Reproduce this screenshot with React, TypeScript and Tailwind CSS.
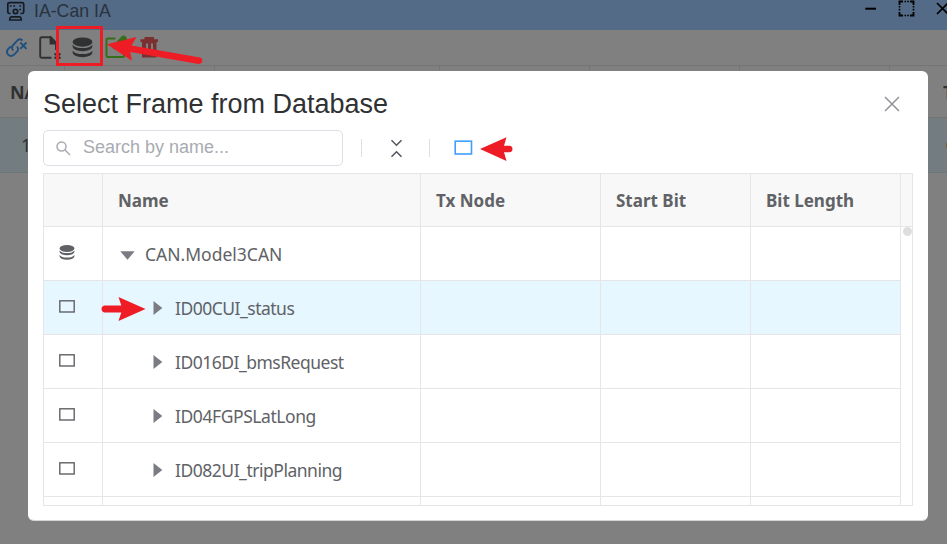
import React from 'react';

const uiFont = 'font-["Noto_Sans","Open_Sans",sans-serif]';
const arial = 'font-["Liberation_Sans",Arial,sans-serif]';

function DatabaseIcon({ className }: { className: string }) {
  return (
    <svg className={className} viewBox="0 0 21 20" fill="currentColor">
      <ellipse cx="10.5" cy="4.6" rx="9.9" ry="4.6" />
      <path d="M.6 7.200Q3 10.600 10.5 10.600T20.400 7.200V9Q20.400 11 17.700 12.300Q14.700 13.700 10.500 13.700T3.300 12.300Q.600 11 .600 9Z" />
      <path d="M.6 13.200Q3 16.600 10.500 16.600T20.400 13.200V15Q20.400 17 17.700 18.300Q14.700 19.700 10.500 19.700T3.300 18.300Q.600 17 .600 15Z" />
    </svg>
  );
}

function FrameIcon() {
  return (
    <svg className="h-[13px] w-4" viewBox="0 0 16 13" fill="none" stroke="#606266" strokeWidth="1.4">
      <rect x=".8" y=".8" width="14.4" height="11.2" />
    </svg>
  );
}

function TitleBar() {
  return (
    <header className="flex h-[30px] items-start bg-[#536b87] text-[#161b22]">
      <svg className="ml-[6px] mt-[1px] h-[21px] w-[20px]" viewBox="6 1 20 21" fill="none" stroke="currentColor" strokeWidth="1.7">
        <path d="M10.500 13.500H9.500Q7.800 13.500 7.800 12V4Q7.800 2.700 9.500 2.700H22Q23.700 2.700 23.700 4V12Q23.700 13.500 22 13.500H20.500" />
        <circle cx="15.500" cy="11.500" r="2.200" />
        <path d="M9.800 20V18.500Q10 16.800 12 16.800H19Q21 16.800 21.200 18.500V20Z" />
        <path d="M9.800 6h1.800M13.300 6h1.800M19.300 6h1.800M19.300 9.500h1.800" />
      </svg>
      <span className={`${arial} ml-[8px] -mt-px text-[17.700px] leading-6 text-[#2a323c]`}>IA-Can IA</span>
      <div className="ml-auto flex text-black">
        <svg className="h-[18px] w-[82px]" viewBox="865 0 82 18" fill="none" stroke="currentColor">
          <path d="M865.3 8.7H876" strokeWidth="2" />
          <path d="M899.5 5V1.5H903M910 1.5H913.5V5M913.5 12V15.5H910M903 15.5H899.5V12" strokeWidth="1.8" />
          <path d="M904.5 1.5H909M904.5 15.5H909M899.5 6V11M913.5 6V11" strokeWidth="1.6" strokeDasharray="1.6 1.2" />
          <path d="M937 3L948 14M937 14L948 3" strokeWidth="1.7" />
        </svg>
      </div>
    </header>
  );
}

function Toolbar() {
  return (
    <div className="flex h-9 items-start border-b border-[#757575] bg-[#808080]">
      <svg className="ml-[5px] mt-[7px] h-[22px] w-[23px]" viewBox="5 37 23 22" fill="none" stroke="#205080" strokeWidth="1.900">
        <path d="M10.800 46.300L8.200 49Q5.700 51.800 8.100 54.600Q11 57.200 13.900 54.800L17.200 51.500Q19 49 17 46.500" />
        <path d="M13.300 50.500Q10.700 47.800 13.200 45L16.500 41.300Q19.500 37.700 22.500 40.500" />
        <path d="M20.300 42.500L26.500 48.800M26.500 42.500L20.300 48.800" />
      </svg>
      <svg className="ml-[10px] mt-[6px] h-6 w-[24px]" viewBox="38 36 24 24" fill="none" stroke="#303133" strokeWidth="1.900">
        <path d="M51.500 57.800H42Q40.200 57.800 40.200 56V39Q40.200 37.300 42 37.300H50.500L56 43V50" />
        <path d="M50.500 37L56.500 43.500H50.500Z" fill="#303133" />
        <path d="M54.500 53.500L60.500 58.500M60.500 53.500L54.500 58.500" />
      </svg>
      <DatabaseIcon className="ml-[10px] mt-[7px] h-[21px] w-[21px] text-[#303133]" />
      <svg className="ml-3 mt-[5px] h-[24px] w-[24px]" viewBox="105 35 24 24" fill="none" stroke="#356f17" strokeWidth="2">
        <path d="M115.500 38.500H107.500Q106.500 38.500 106.500 39.500V55.500Q106.500 57 107.500 57H123Q124 57 124 56V47" />
        <path d="M113 49V45.500L121.500 36.500Q124 34.500 126 37Q128 39 126 41L117 49.500Z" fill="#356f17" stroke="none" />
      </svg>
      <svg className="ml-[11px] mt-[7px] h-[21px] w-[19px]" viewBox="140 37 19 21" fill="#7a3030">
        <path fillRule="evenodd" d="M140.500 39.200H144.500V37H154V39.200H158V42H156.500V57.500H142V42H140.500ZM146 43.500V53.500H148V43.500ZM151 43.500V53.500H153V43.500Z" />
      </svg>
    </div>
  );
}

function Workspace() {
  return (
    <div className={`${uiFont} text-lg text-[#303133]`}>
      <div className="flex h-[52px] border-b border-[#757575]">
        <div className="flex w-[65px] items-center border-r border-[#757575] pl-[10px] font-bold tracking-[-0.500px]">N/</div>
        <div className="w-[150px] border-r border-[#757575]" />
        <div className="w-[225px] border-r border-[#757575]" />
        <div className="w-[150px] border-r border-[#757575]" />
        <div className="w-[150px] border-r border-[#757575]" />
        <div className="w-[150px] border-r border-[#757575]" />
        <div className="flex flex-1 items-center overflow-hidden pl-[53px] font-bold">T</div>
      </div>
      <div className="flex h-[55px] items-center border-b border-[#6c7678] bg-[#737c80]">
        <span className="pl-[21px]">1</span>
        <span className="ml-auto h-[5px] w-[1px] bg-[#8a5c20]" />
      </div>
    </div>
  );
}

type FrameRow = { name: string; kind: 'database' | 'frame'; selected?: boolean; tracking: string };

const rows: FrameRow[] = [
  { name: 'CAN.Model3CAN', kind: 'database', tracking: 'tracking-[0px]' },
  { name: 'ID00CUI_status', kind: 'frame', selected: true, tracking: 'tracking-[-0.5px]' },
  { name: 'ID016DI_bmsRequest', kind: 'frame', tracking: 'tracking-[-0.5px]' },
  { name: 'ID04FGPSLatLong', kind: 'frame', tracking: 'tracking-[-0.43px]' },
  { name: 'ID082UI_tripPlanning', kind: 'frame', tracking: 'tracking-[-0.48px]' },
];

const columns = 'grid shrink-0 grid-cols-[59px_318px_180px_150px_150px]';
const cell = 'border-r border-b border-[#e6e6e6]';
const headCell = 'flex items-center border-r border-[#e6e6e6] pl-[15px] pt-[2px]';

function FrameTable() {
  return (
    <div className={`${uiFont} mt-[7px] flex h-[333px] w-[870px] flex-col overflow-hidden border border-[#e6e6e6] text-[#606266]`}>
      <div className="flex h-[53px] shrink-0 border-b border-[#e6e6e6] bg-[#f8f8f8] text-[17px] font-bold">
        <div className={columns}>
          <div className={headCell} />
          <div className={headCell}><span>Name</span></div>
          <div className={headCell}><span>Tx Node</span></div>
          <div className={headCell}><span>Start Bit</span></div>
          <div className={headCell}><span>Bit Length</span></div>
        </div>
      </div>
      <div className="flex min-h-0 flex-1">
        <div className="flex flex-col overflow-hidden">
          {rows.map((row) => (
            <div key={row.name} className={`${columns} h-[54px] ${row.selected ? 'bg-[#e6f7ff]' : 'bg-white'}`}>
              <div className={`${cell} pl-[15px] ${row.kind === 'database' ? 'pt-[18px]' : 'pt-[19px]'}`}>
                {row.kind === 'database' ? <DatabaseIcon className="h-[15px] w-4" /> : <FrameIcon />}
              </div>
              <div className={`${cell} flex items-center text-[17.5px]`}>
                {row.kind === 'database' ? (
                  <svg className="ml-[17px] mt-[3px] h-[9px] w-[15px]" viewBox="0 0 15 9" fill="#7b7c83"><path d="M.3.3H14.700L7.500 8.700Z" /></svg>
                ) : (
                  <svg className="ml-[50px] mt-px h-[14px] w-[10px]" viewBox="0 0 10 14" fill="#7b7c83"><path d="M.5 0L9.300 7L.5 14Z" /></svg>
                )}
                <span className={`${row.kind === 'database' ? 'ml-[10px]' : 'ml-3'} mt-[2px] whitespace-nowrap ${row.tracking}`}>{row.name}</span>
              </div>
              <div className={cell} />
              <div className={cell} />
              <div className={cell} />
            </div>
          ))}
          <div className={`${columns} h-[54px]`}>
            <div className={cell} />
            <div className={cell} />
            <div className={cell} />
            <div className={cell} />
            <div className={cell} />
          </div>
        </div>
        <div className="ml-[2px] h-[9px] w-[9px] rounded-full bg-[#dddee0]" />
      </div>
    </div>
  );
}

function SelectFrameDialog() {
  return (
    <section className="absolute left-7 top-[71px] flex h-[450px] w-[900px] flex-col rounded-[6px] border-b border-[#d5d5d5] bg-white pl-[15px]">
      <div className="flex h-[59px] items-start">
        <h1 className={`${arial} mt-[15px] whitespace-nowrap text-[27px] leading-9 text-[#303133]`}>Select Frame from Database</h1>
        <svg className="ml-auto mr-7 mt-[25px] h-4 w-4" viewBox="0 0 16 16" stroke="#909399" strokeWidth="1.500"><path d="M1 1L15 15M15 1L1 15" /></svg>
      </div>
      <div className="flex h-9 items-center">
        <div className="flex h-9 w-[300px] items-center rounded-[5px] border border-[#dcdfe6]">
          <svg className="ml-3 h-[15px] w-[15px]" viewBox="0 0 15 15" fill="none" stroke="#a8abb2" strokeWidth="1.500">
            <circle cx="5.500" cy="5.500" r="4.500" /><path d="M8.800 8.800L14 14" />
          </svg>
          <span className={`${arial} -mt-[2px] ml-[12px] text-[18px] text-[#a8abb2]`}>Search by name...</span>
        </div>
        <div className="ml-[18px] h-[18px] w-px bg-[#dcdfe6]" />
        <svg className="ml-7 h-[19px] w-[13px]" viewBox="0 0 13 19" fill="none" stroke="#55585e" strokeWidth="1.600">
          <path d="M1.500 1.200L6.500 6.200L11.500 1.200M1.500 17.800L6.500 12.800L11.500 17.800" />
        </svg>
        <div className="ml-[26px] h-[18px] w-px bg-[#dcdfe6]" />
        <svg className="ml-[24px] mt-[-1px] h-[15px] w-[19px]" viewBox="0 0 19 15" fill="none" stroke="#409eff" strokeWidth="1.600">
          <rect x="1.200" y="1.200" width="16.300" height="12.800" />
        </svg>
      </div>
      <FrameTable />
    </section>
  );
}

function Annotations() {
  return (
    <svg className="pointer-events-none absolute inset-0 h-[544px] w-[947px]" viewBox="0 0 947 544" fill="#ee1c24">
      <rect x="57.500" y="27.500" width="44" height="37" fill="none" stroke="#ee1c24" strokeWidth="3" />
      <path d="M107 44.300L136.500 37L131.500 45.500L200 57.600Q202.800 58.500 202.300 61.300Q201.700 64.500 198.500 64L130.300 52L131.800 60.700Z" />
      <path d="M480 149L506.500 137.200L504 145.700H509.500Q512.500 146 512.500 149T509.500 152.300H504L506.500 161Z" />
      <path d="M145.500 309L118.500 321L121.300 312.400H104.500Q101.500 312 101.500 309T104.500 305.500H121.300L118.500 297Z" />
    </svg>
  );
}

export default function App() {
  return (
    <main className="relative h-[544px] w-[947px] overflow-hidden bg-[#808080]">
      <TitleBar />
      <Toolbar />
      <Workspace />
      <SelectFrameDialog />
      <Annotations />
    </main>
  );
}
